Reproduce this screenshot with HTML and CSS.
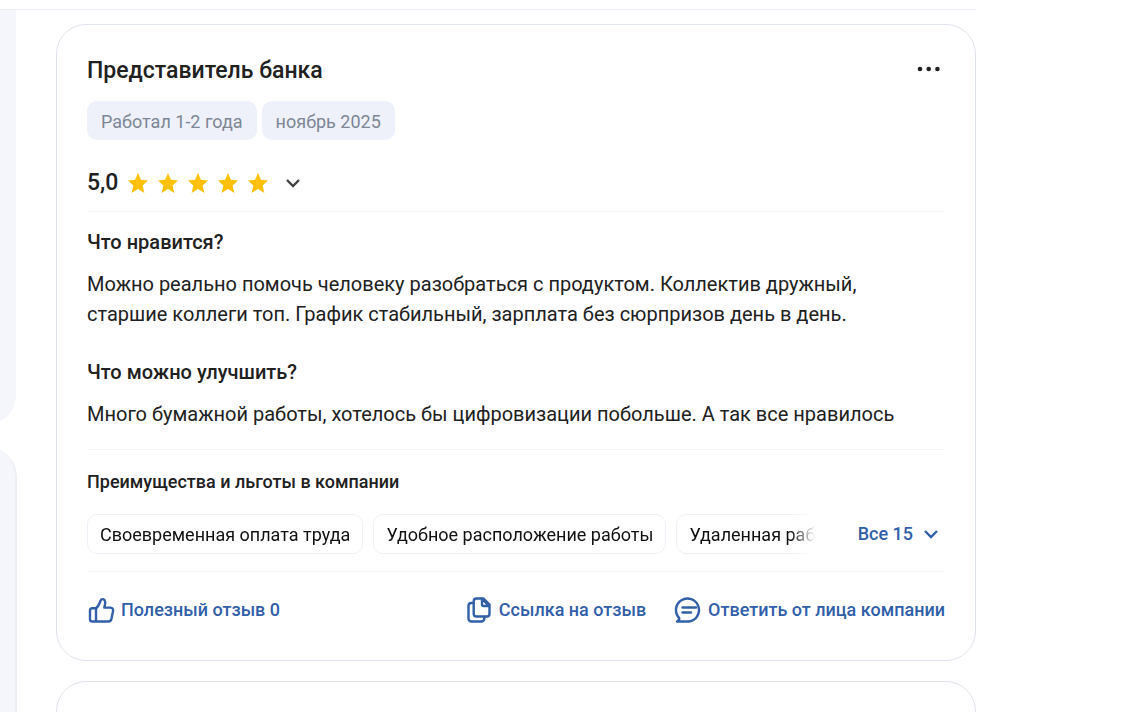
FILE: index.html
```html
<!DOCTYPE html>
<html lang="ru">

<head>
    <meta charset="UTF-8">
    <meta name="viewport" content="width=device-width, initial-scale=1.0">
    <title>Отзывы о работе</title>
    <link rel="stylesheet" href="styles.css">
</head>

<body>
    <svg class="sprite" aria-hidden="true">
        <symbol id="star" viewBox="0 0 20 20">
            <path d="M10 0l2.900 6.800 7.100.7-5.400 4.900L16.400 20 10 16 3.600 20l1.800-7.600L0 7.500l7.100-.7z" />
        </symbol>
        <symbol id="chevron" viewBox="0 0 14 10">
            <path d="M1 2L7 8l6-6" fill="none" stroke="currentColor" stroke-width="2.400" />
        </symbol>
    </svg>

    <div class="page">
        <aside class="sidebar">
            <div class="side-block side-block-top"></div>
            <div class="side-block side-block-bottom"></div>
        </aside>

        <main class="reviews">
            <article class="review">
                <header class="review-header">
                    <h2 class="review-title">Представитель банка</h2>
                    <button class="menu-btn" type="button" aria-label="Меню отзыва">
                        <svg width="24" height="6" viewBox="0 0 24 6" fill="currentColor">
                            <circle cx="3" cy="3" r="2.300" />
                            <circle cx="11.700" cy="3" r="2.300" />
                            <circle cx="20.400" cy="3" r="2.300" />
                        </svg>
                    </button>
                </header>

                <div class="tags">
                    <span class="tag">Работал 1-2 года</span>
                    <span class="tag">ноябрь 2025</span>
                </div>

                <div class="rating">
                    <span class="rating-value">5,0</span>
                    <div class="stars" role="img" aria-label="5 из 5">
                        <svg><use href="#star" /></svg>
                        <svg><use href="#star" /></svg>
                        <svg><use href="#star" /></svg>
                        <svg><use href="#star" /></svg>
                        <svg><use href="#star" /></svg>
                    </div>
                    <button class="rating-toggle" type="button" aria-label="Подробнее об оценке">
                        <svg class="chevron"><use href="#chevron" /></svg>
                    </button>
                </div>

                <section class="review-body">
                    <h3 class="question">Что нравится?</h3>
                    <p class="answer">Можно реально помочь человеку разобраться с продуктом. Коллектив дружный, старшие коллеги топ. График стабильный, зарплата без сюрпризов день в день.</p>
                    <h3 class="question">Что можно улучшить?</h3>
                    <p class="answer">Много бумажной работы, хотелось бы цифровизации побольше. А так все нравилось</p>
                </section>

                <section class="benefits">
                    <h4 class="benefits-title">Преимущества и льготы в компании</h4>
                    <div class="benefits-row">
                        <ul class="benefits-list">
                            <li class="benefit">Своевременная оплата труда</li>
                            <li class="benefit">Удобное расположение работы</li>
                            <li class="benefit">Удаленная работа</li>
                        </ul>
                        <button class="link-btn all-btn" type="button">Все 15
                            <svg class="chevron"><use href="#chevron" /></svg>
                        </button>
                    </div>
                </section>

                <footer class="actions">
                    <button class="link-btn useful-btn" type="button">
                        <svg class="icon" viewBox="0 0 28 28">
                            <path d="M9 12.300H5.300a2.300 2.300 0 0 0-2.300 2.300v8.600a2.300 2.300 0 0 0 2.300 2.300h16.200a3 3 0 0 0 2.900-2.400l1.700-8.300a2.700 2.700 0 0 0-2.600-3.200h-6.200c.7-2.200 1.200-4.400.8-6.200-.5-2.500-3.500-3.100-4.500-.9-1.300 3.100-2.100 6.300-4.600 7.800zV25" />
                        </svg>
                        Полезный отзыв 0
                    </button>
                    <button class="link-btn" type="button">
                        <svg class="icon" viewBox="0 0 28 28">
                            <path d="M11.500 2.500h7l6 6v9.200a2.800 2.800 0 0 1-2.800 2.800H11.500a2.800 2.800 0 0 1-2.800-2.800V5.300a2.800 2.800 0 0 1 2.800-2.800z" />
                            <path d="M17 3v5.500a1.500 1.500 0 0 0 1.500 1.500H24L17.500 3.500M8.500 7H6.300a2.800 2.800 0 0 0-2.800 2.800v12.900a2.800 2.800 0 0 0 2.800 2.800h10.200a2.800 2.800 0 0 0 2.800-2.800V21" />
                        </svg>
                        Ссылка на отзыв
                    </button>
                    <button class="link-btn" type="button">
                        <svg class="icon" viewBox="0 0 28 28">
                            <path d="M3 25.500c1.700-.9 2.500-2 2.200-3.400A11.500 11.500 0 1 1 15 25.500z" />
                            <path d="M8.500 11.500h13.500M8.500 16.500h8.500" />
                        </svg>
                        Ответить от лица компании
                    </button>
                </footer>
            </article>

            <article class="review"></article>
        </main>
    </div>
</body>

</html>
```
FILE: styles.css
```css
* {
    margin: 0;
    padding: 0;
    box-sizing: border-box;
}

body {
    font-family: Roboto, 'Liberation Sans', sans-serif;
    font-size: 20px;
    line-height: 30px;
    color: #212121;
    background: #fff;
    height: 100vh;
    padding-top: 9px;
    overflow: hidden;
}

button {
    font: inherit;
    color: inherit;
    background: none;
    border: none;
    cursor: pointer;
}

svg {
    display: block;
    flex: none;
}

.sprite {
    display: none;
}

.page {
    display: flex;
    gap: 39px;
    height: 100%;
    margin-right: 147px;
    border-top: 1px solid #ebedf5;
}

/* the side column continues past the left edge of the window */
.sidebar {
    display: flex;
    flex-direction: column;
    gap: 22px;
    width: 60px;
    margin-left: -43px;
}

.side-block {
    background: #f4f6fc;
}

.side-block-top {
    height: 415px;
    margin-right: 1px;
    border-bottom-right-radius: 30px;
}

.side-block-bottom {
    flex: 1;
    border-right: 2px solid #eceef3;
    border-top-right-radius: 30px;
}

.reviews {
    flex: 1;
    min-width: 0;
    padding-top: 14px;
}

.review {
    min-height: 200px;
    margin-bottom: 20px;
    padding: 30px 30px 36px;
    border: 1px solid #dfe3eb;
    border-radius: 30px;
}

.review-header {
    display: flex;
    justify-content: space-between;
    align-items: center;
}

.review-title {
    font-size: 23px;
    line-height: 32px;
    font-weight: 500;
}

.menu-btn {
    padding: 8px 4px 12px;
}

.tags {
    display: flex;
    gap: 5px;
    margin-top: 14px;
}

.tag {
    padding: 7px 14px 4px;
    border-radius: 10px;
    background: #eef1f9;
    color: #7c8694;
    font-size: 18px;
    line-height: 28px;
}

.rating {
    display: flex;
    align-items: center;
    margin-top: 28px;
    padding-bottom: 13px;
    border-bottom: 1px solid #f3f4f7;
}

.rating-value {
    font-size: 23px;
    font-weight: 500;
}

.stars {
    display: flex;
    gap: 10px;
    margin-left: 10px;
}

.stars svg {
    width: 20px;
    height: 20px;
    fill: #ffc107;
}

.rating-toggle {
    margin-left: 18px;
    color: #424242;
}

.chevron {
    width: 14px;
    height: 10px;
}

.review-body {
    padding: 15px 0 20px;
    border-bottom: 1px solid #f3f4f7;
}

.question {
    font-size: 20px;
    font-weight: 500;
}

.answer {
    margin-top: 12px;
    padding-right: 30px;
}

.answer + .question {
    margin-top: 28px;
}

.benefits {
    padding: 18px 0 17px;
    border-bottom: 1px solid #f3f4f7;
    font-size: 18px;
    line-height: 28px;
}

.benefits-title {
    font-size: 18px;
    font-weight: 500;
}

.benefits-row {
    display: flex;
    align-items: center;
    gap: 43px;
    margin-top: 18px;
}

/* the last visible item fades out at the right edge */
.benefits-list {
    display: flex;
    flex: 1;
    gap: 10px;
    min-width: 0;
    overflow: hidden;
    list-style: none;
    mask-image: linear-gradient(to right, #000 calc(100% - 24px), transparent);
}

.benefit {
    flex: none;
    padding: 6px 12px 4px;
    border: 1px solid #eff0f7;
    border-radius: 10px;
    color: #111;
}

.link-btn {
    display: flex;
    align-items: center;
    gap: 6px;
    color: #315fa8;
    font-size: 18px;
    line-height: 28px;
    font-weight: 500;
    white-space: nowrap;
}

.all-btn {
    gap: 11px;
    padding-right: 7px;
}

.actions {
    display: flex;
    gap: 28px;
    padding-top: 24px;
}

.useful-btn {
    margin-right: auto;
}

.icon {
    width: 28px;
    height: 28px;
    fill: none;
    stroke: currentColor;
    stroke-width: 2.4px;
    stroke-linecap: round;
    stroke-linejoin: round;
}
```
